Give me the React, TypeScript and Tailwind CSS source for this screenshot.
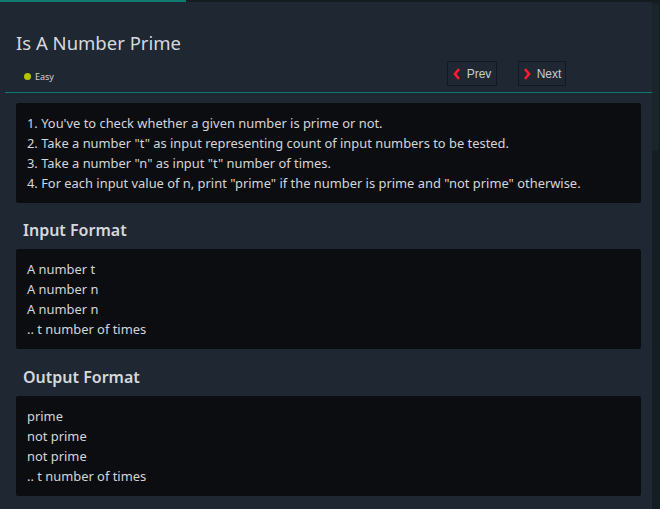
import React from "react";

const font = { fontFamily: '"Noto Sans", "Open Sans", sans-serif' };

function Box({ lines }: { lines: string[] }) {
  return (
    <div className="ml-[16px] mr-[11px] rounded-[2px] bg-[#0c0d11] px-[11px] py-[10px] text-[12.9px] leading-[20px] text-[#d3d5d8]">
      {lines.map((l, i) => (
        <div key={i}>{l}</div>
      ))}
    </div>
  );
}

export default function App() {
  return (
    <div className="flex h-[509px] w-[660px] overflow-hidden bg-[#1f2733]" style={font}>
      <div className="flex min-w-0 flex-1 flex-col">
        <div className="flex h-[2px] bg-[#141c22]">
          <div className="h-[2px] w-[186px] bg-[#0f7a6e]" />
        </div>
        <div className="px-[16px] pt-[28px]">
          <h1 className="text-[18.5px] leading-[26px] text-[#d6d8db]">Is A Number Prime</h1>
        </div>
        <div className="flex items-center pl-[24px] pr-[86px] pt-[5px]">
          <div className="flex items-center gap-[4px] pt-[6px]">
            <span className="h-[7px] w-[7px] rounded-full bg-[#b6c400]" />
            <span className="text-[9px] leading-[12px] text-[#cfd2d5]">Easy</span>
          </div>
          <div className="ml-auto flex gap-[21px]">
            <button
              className="flex h-[25px] w-[50px] items-center justify-center gap-[6px] border border-[#121920] text-[12px] text-[#c9ccd0]"
              style={{ fontFamily: '"Liberation Sans", Arial, sans-serif' }}
            >
              <svg width="8" height="12" viewBox="0 0 8 12">
                <path d="M6 1.2 L2 6 L6 10.8" stroke="#ff1a2e" strokeWidth="2.6" fill="none" />
              </svg>
              Prev
            </button>
            <button
              className="flex h-[25px] w-[48px] items-center justify-center gap-[6px] border border-[#121920] text-[12px] text-[#c9ccd0]"
              style={{ fontFamily: '"Liberation Sans", Arial, sans-serif' }}
            >
              <svg width="8" height="12" viewBox="0 0 8 12">
                <path d="M2 1.2 L6 6 L2 10.8" stroke="#ff1a2e" strokeWidth="2.6" fill="none" />
              </svg>
              Next
            </button>
          </div>
        </div>
        <div className="ml-[5px] mt-[6px] h-[1px] bg-[#0f7a6e]" />
        <div className="mt-[10px]">
          <Box
            lines={[
              "1. You've to check whether a given number is prime or not.",
              '2. Take a number "t" as input representing count of input numbers to be tested.',
              '3. Take a number "n" as input "t" number of times.',
              '4. For each input value of n, print "prime" if the number is prime and "not prime" otherwise.',
            ]}
          />
        </div>
        <h2 className="px-[23px] pb-[7px] pt-[16px] text-[16px] font-semibold leading-[23px] text-[#d6d8db]">
          Input Format
        </h2>
        <Box lines={["A number t", "A number n", "A number n", ".. t number of times"]} />
        <h2 className="px-[23px] pb-[7px] pt-[17px] text-[16px] font-semibold leading-[23px] text-[#d6d8db]">
          Output Format
        </h2>
        <Box lines={["prime", "not prime", "not prime", ".. t number of times"]} />
      </div>
      <div className="w-[8px] bg-[#141d22] pt-[3px]">
        <div className="h-[148px] w-[7px] rounded-[3px] bg-[#18262b]" />
      </div>
    </div>
  );
}
